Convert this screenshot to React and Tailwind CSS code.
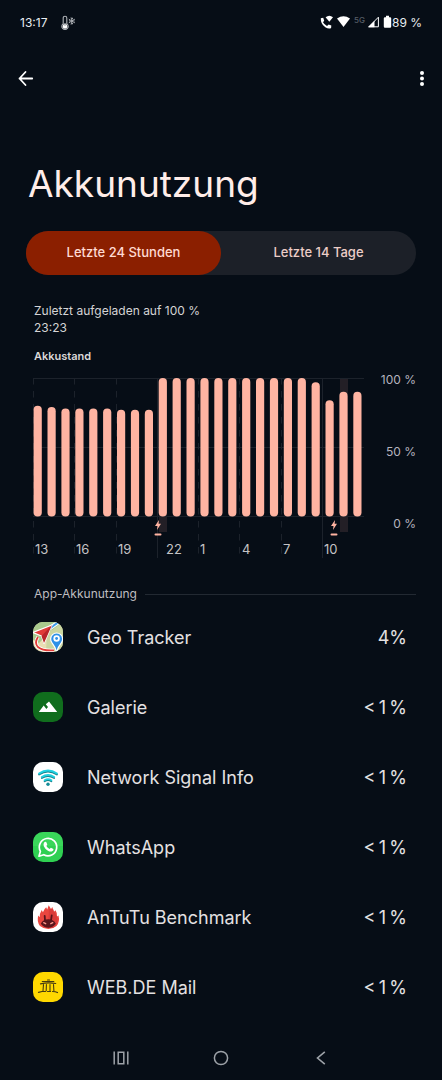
import React from "react";

const LEVELS = [
  80, 79, 78, 78, 78, 78, 77, 77, 77, 100, 100, 100, 100, 100, 100, 100, 100,
  100, 100, 100, 97, 84, 90, 90,
];

const HOURS = [
  { x: 1, label: "13", text: 2 },
  { x: 42, label: "16", text: 43 },
  { x: 84, label: "19", text: 85 },
  { x: 125, label: "22", text: 133, solid: true },
  { x: 166, label: "1", text: 167 },
  { x: 207, label: "4", text: 209 },
  { x: 249, label: "7", text: 250 },
  { x: 290, label: "10", text: 291, solid: true },
];

function StatusBar() {
  return (
    <div className="flex h-11 items-center justify-between px-5 pt-0.5 text-[12px] text-[#e9edf2]">
      <div className="flex items-center gap-3.5">
        <span className="text-[12px]">13:17</span>
        <svg className="h-4 w-4" viewBox="0 0 16 16" fill="none" stroke="#aeb2b7">
          <path d="M2.2 8.7V3a1.8 1.8 0 0 1 3.6 0v5.7a3.2 3.2 0 1 1-3.6 0Z" strokeWidth="1.1" />
          <circle cx="4" cy="11.4" r="2.3" fill="#fff" stroke="none" />
          <path d="M4 8v3" strokeWidth="1.2" />
          <path d="M10.8 2.5v7M7.8 4.2l6 3.6M13.8 4.2l-6 3.6M9.6 3l1.2 1 1.2-1M9.6 9l1.2-1 1.2 1M8 6l1-.3M13.6 6l-1-.3" strokeWidth="1" />
        </svg>
      </div>
      <div className="flex items-center">
        <svg className="h-4 w-[72px]" viewBox="0 0 72 16" fill="#fff" fontFamily="Inter, sans-serif">
          <path d="M5.6 2.200q3.700-3 7.400 0L9.300 6.700Z" />
          <path d="M.8 3.200 3.200 2.700l1 3-1.200 1.600q1.400 2.500 4 3.600l1.700-1.500 2.600 1-.2 2.500q-2.200 1.300-5.800-.7Q.500 9 .800 3.200Z" />
          <path d="M17 3.600q6.500-4.600 13 0L23.500 12Z" />
          <text x="34" y="8" fontSize="8" fontWeight="500" fill="#565d67">5G</text>
          <path d="M48.800 11.800 58.400 2.200v9.600Z" fill="none" stroke="#fff" />
          <path d="M48 12.300 54.500 5.800v6.500Z" />
          <path d="M66 .8h3v1.500h1q1.200 0 1.200 1v8.200q0 1.200-1.200 1.200h-5q-1.200 0-1.200-1.200V3.300q0-1 1.200-1h1Z" />
        </svg>
        <span>89 %</span>
      </div>
    </div>
  );
}

function BatteryChart() {
  return (
    <svg
      className="h-auto min-w-0 flex-1"
      viewBox="0 0 331 184"
      role="img"
      aria-label="Akkustand"
      fontFamily="Inter, sans-serif"
    >
      <g fill="#231f26">
        <rect x="126" y="2" width="8" height="154" />
        <rect x="307" y="2" width="8" height="154" />
      </g>
      <g stroke="#1c222b">
        <path d="M0 2.500H331M0 71.500H331M0 140.500H331" />
        {HOURS.map((h) => (
          <path
            key={h.label}
            d={`M${h.x - 0.5} 2V${h.solid ? 182 : 179}`}
            strokeDasharray={h.solid ? undefined : "6.500 6.500"}
          />
        ))}
      </g>
      <g fill="#ffb4a2">
        {LEVELS.map((v, i) => (
          <rect
            key={i}
            x={0.6 + i * 13.9}
            y={140.5 - v * 1.385}
            width="8.200"
            height={v * 1.385}
            rx="4.100"
          />
        ))}
        {[125, 301].map((x) => (
          <g key={x} transform={`translate(${x} 149)`}>
            <path d="M1-5-3 1h2.500L-1 5 3-1.200H.600Z" />
            <rect x="-3.500" y="8.500" width="7" height="2" rx="1" />
          </g>
        ))}
      </g>
      <g fill="#c5c3c5" fontSize="13">
        {HOURS.map((h) => (
          <text key={h.label} x={h.text} y="178">
            {h.label}
          </text>
        ))}
      </g>
    </svg>
  );
}

function GeoIcon() {
  return (
    <>
      <rect width="30" height="30" fill="#e9dfb4" />
      <path d="M0 0h30v11L19 8 6 21 0 18Z" fill="#a9c98d" />
      <path d="M14 12 30 0v30H13Z" fill="#cbd6a1" />
      <path d="M17 6 27-1" stroke="#fff" strokeWidth="4" />
      <path d="M16 7 27-1" stroke="#3d9be9" strokeWidth="2" />
      <path d="M5 15q-4 6 0 10 4.500 4 16 3.300" fill="none" stroke="#fff" strokeWidth="3.500" />
      <path d="M5 15q-4 6 0 10 4.500 4 16 3.300" fill="none" stroke="#e23b36" strokeWidth="1.800" />
      <path d="M0 10.500 19 3 11 21.500 8.500 14Z" fill="#e03c38" stroke="#fff" strokeWidth="1.200" strokeLinejoin="round" />
      <path d="M19 3 8.500 14 11 21Z" fill="#b9262b" />
      <path d="M23.500 30q-1-5-4.500-9.200a6 6 0 1 1 9.300 0Q25 25 23.500 30Z" fill="#2e91e8" stroke="#fff" strokeWidth="1.200" />
      <circle cx="23.600" cy="16.500" r="3.200" fill="#fff" />
      <circle cx="23.600" cy="16.500" r="1.400" fill="#2e91e8" />
    </>
  );
}

function GalleryIcon() {
  return (
    <>
      <rect width="30" height="30" fill="#106d1d" />
      <path d="M5.800 20 10.700 13.500 13.400 17 15 15 12.800 12.300 16 9.500 24.200 20Z" fill="#fff" />
    </>
  );
}

function SignalIcon() {
  return (
    <>
      <rect width="30" height="30" fill="#fff" />
      <g fill="none" strokeLinecap="round">
        <g stroke="#16808a" strokeWidth="1.800">
          <path d="M6 12.600q9-6.200 18 0M8.800 16.100q6.200-4.200 12.400 0M11.600 19.300q3.400-2.200 6.800 0" />
        </g>
        <g stroke="#1fd0e0" strokeWidth="1.800">
          <path d="M6 11.600q9-6.200 18 0M8.800 15.100q6.200-4.200 12.400 0M11.600 18.300q3.400-2.200 6.800 0" />
        </g>
      </g>
      <circle cx="15" cy="22.200" r="1.700" fill="#168c98" />
    </>
  );
}

function WhatsAppIcon() {
  return (
    <>
      <rect width="30" height="30" fill="#2fd052" />
      <rect width="30" height="14" fill="#46dc62" opacity=".5" />
      <path d="M6 24.200 7.400 19.300a8.700 8.700 0 1 1 3.400 3.400Z" fill="none" stroke="#fff" strokeWidth="1.700" strokeLinejoin="round" />
      <path d="M11.300 10.300q1-1 1.900-.2l1.100 2.500-.9 1.400q1.100 2.100 3.200 3l1.300-1.300 2.500 1.200q.4 1.400-.9 2.200-1.900 1.200-4.600-.4-2.900-1.700-4.100-4.500-.8-2.300.5-3.900Z" fill="#fff" />
    </>
  );
}

function AntutuIcon() {
  return (
    <>
      <rect width="30" height="30" fill="#fff" />
      <path d="M7 24Q3.500 19.500 5.300 13.500l1.500 1.800q-.4-3.600 1.900-7.300l1.200 2.300Q11 7 13.200 5.200l1 2.300L15.700 3.200 18 7l1.300-2L21 9.700l1.500-1.500q2 3 1.500 6.200l1.500-1q1.600 6.500-2 10.600Q20 27 15.300 27T7 24Z" fill="#ea463f" />
      <path d="M16 7h4l4 8q2 7-4 11h-5Z" fill="#c93236" opacity=".5" />
      <path d="M12 18.500 11.700 14M18 18.500 18.700 13.500" stroke="#58151c" strokeWidth="1.800" strokeLinecap="round" />
      <path d="M7.800 21.800q2-4.600 7.500-4.600t7.500 4.600q-3 4-7.500 4t-7.500-4Z" fill="#58151c" />
      <path d="m10.700 20.700 2 1M19.800 20.700l-2 1" stroke="#ff9b8e" strokeWidth="1.300" strokeLinecap="round" />
    </>
  );
}

function WebdeIcon() {
  return (
    <>
      <rect width="30" height="30" fill="#ffd800" />
      <g fill="none" stroke="#453b12" strokeLinecap="round">
        <path d="M7.500 11.800Q15 10.300 22.700 11.500M9.300 9.500h11.500M14.500 8h2" strokeWidth="1.200" />
        <path d="M10.500 12.500 10 18.800M13.400 12.500 13.200 18.800M17 12.500v6.300M20.500 12.500l.4 6.300" strokeWidth="1.100" />
        <path d="M5.500 20.300 9 19.500h3.500M14.500 19.500h3M19.500 19.500q3 0 5 1" strokeWidth="1.200" />
      </g>
    </>
  );
}

const LESS_THAN_ONE = "<\u20091\u2009%";

const APPS = [
  { name: "Geo Tracker", usage: "4%", Icon: GeoIcon },
  { name: "Galerie", usage: LESS_THAN_ONE, Icon: GalleryIcon },
  { name: "Network Signal Info", usage: LESS_THAN_ONE, Icon: SignalIcon },
  { name: "WhatsApp", usage: LESS_THAN_ONE, Icon: WhatsAppIcon },
  { name: "AnTuTu Benchmark", usage: LESS_THAN_ONE, Icon: AntutuIcon },
  { name: "WEB.DE Mail", usage: LESS_THAN_ONE, Icon: WebdeIcon },
];

export default function App() {
  return (
    <div className="flex min-h-screen flex-col bg-[#060d16] font-['Inter',sans-serif] text-[#e4e1e2]">
      <StatusBar />
      <header className="flex h-[68px] items-center justify-between px-4">
        <button type="button" aria-label="Zurück">
          <svg className="h-5 w-5" viewBox="0 0 20 20" fill="none" stroke="#fff" strokeWidth="1.800" strokeLinecap="round" strokeLinejoin="round">
            <path d="M16.200 10.500H3.500M9.500 4 3.500 10.500 9.500 17" />
          </svg>
        </button>
        <button type="button" aria-label="Weitere Optionen" className="-mr-1.5">
          <svg className="h-5 w-5" viewBox="0 0 20 20" fill="#fff">
            <circle cx="10" cy="5" r="2" />
            <circle cx="10" cy="10.500" r="2" />
            <circle cx="10" cy="16" r="2" />
          </svg>
        </button>
      </header>

      <main className="flex flex-1 flex-col px-[26px]">
        <h1 className="mt-12 pl-0.5 text-[37px] leading-12 text-[#ffede9]">Akkunutzung</h1>

        <div role="tablist" className="mt-[23px] grid h-11 grid-cols-2 rounded-full bg-[#1c2028] text-[13px] font-medium">
          <button type="button" role="tab" aria-selected="true" className="rounded-full bg-[#8b1f00] text-[#ffdad2]">
            Letzte 24 Stunden
          </button>
          <button type="button" role="tab" aria-selected="false" className="rounded-full text-[#eccdc7]">
            Letzte 14 Tage
          </button>
        </div>

        <p className="mt-[27px] pl-2 text-[12px] leading-[17px] text-[#d5d4d5]">
          Zuletzt aufgeladen auf 100 %
          <br />
          23:23
        </p>

        <h2 className="mt-3 pl-2 text-[11px] leading-4 font-semibold text-[#dbd8d8]">Akkustand</h2>
        <div className="mt-3 flex pl-[7px]">
          <BatteryChart />
          <div className="-mt-1 flex h-[160px] w-[52px] flex-col justify-between text-right text-[12px] leading-4 whitespace-nowrap text-[#b5b3bf]">
            <span>100 %</span>
            <span>50 %</span>
            <span>0 %</span>
          </div>
        </div>

        <div className="mt-[26px] flex items-center gap-2 pl-2">
          <h2 className="text-[12px] leading-4 text-[#bebdc0]">App-Akkunutzung</h2>
          <div className="h-px flex-1 bg-[#222932]" />
        </div>

        <ul>
          {APPS.map(({ name, usage, Icon }) => (
            <li key={name} className="flex h-[70px] items-center pr-[9px] pl-[7px] text-[18px]">
              <svg className="h-[30px] w-[30px] shrink-0 rounded-[10px]" viewBox="0 0 30 30">
                <Icon />
              </svg>
              <span className="ml-6 flex-1">{name}</span>
              <span>{usage}</span>
            </li>
          ))}
        </ul>
      </main>

      <nav className="flex h-11 items-center justify-center gap-20">
        <button type="button" aria-label="Letzte Apps">
          <svg className="h-5 w-5" viewBox="0 0 20 20" fill="none" stroke="#9da2a8" strokeWidth="1.500">
            <path d="M3.200 3.500v13M16.800 3.500v13M7.200 4.200h5.600v11.600H7.200Z" />
          </svg>
        </button>
        <button type="button" aria-label="Startbildschirm">
          <svg className="h-5 w-5" viewBox="0 0 20 20" fill="none" stroke="#9da2a8" strokeWidth="1.500">
            <circle cx="10" cy="10" r="6.600" />
          </svg>
        </button>
        <button type="button" aria-label="Zurück">
          <svg className="h-5 w-5" viewBox="0 0 20 20" fill="none" stroke="#9da2a8" strokeWidth="1.600">
            <path d="M13.800 3.800 6.500 10 13.800 16.200" />
          </svg>
        </button>
      </nav>
    </div>
  );
}
